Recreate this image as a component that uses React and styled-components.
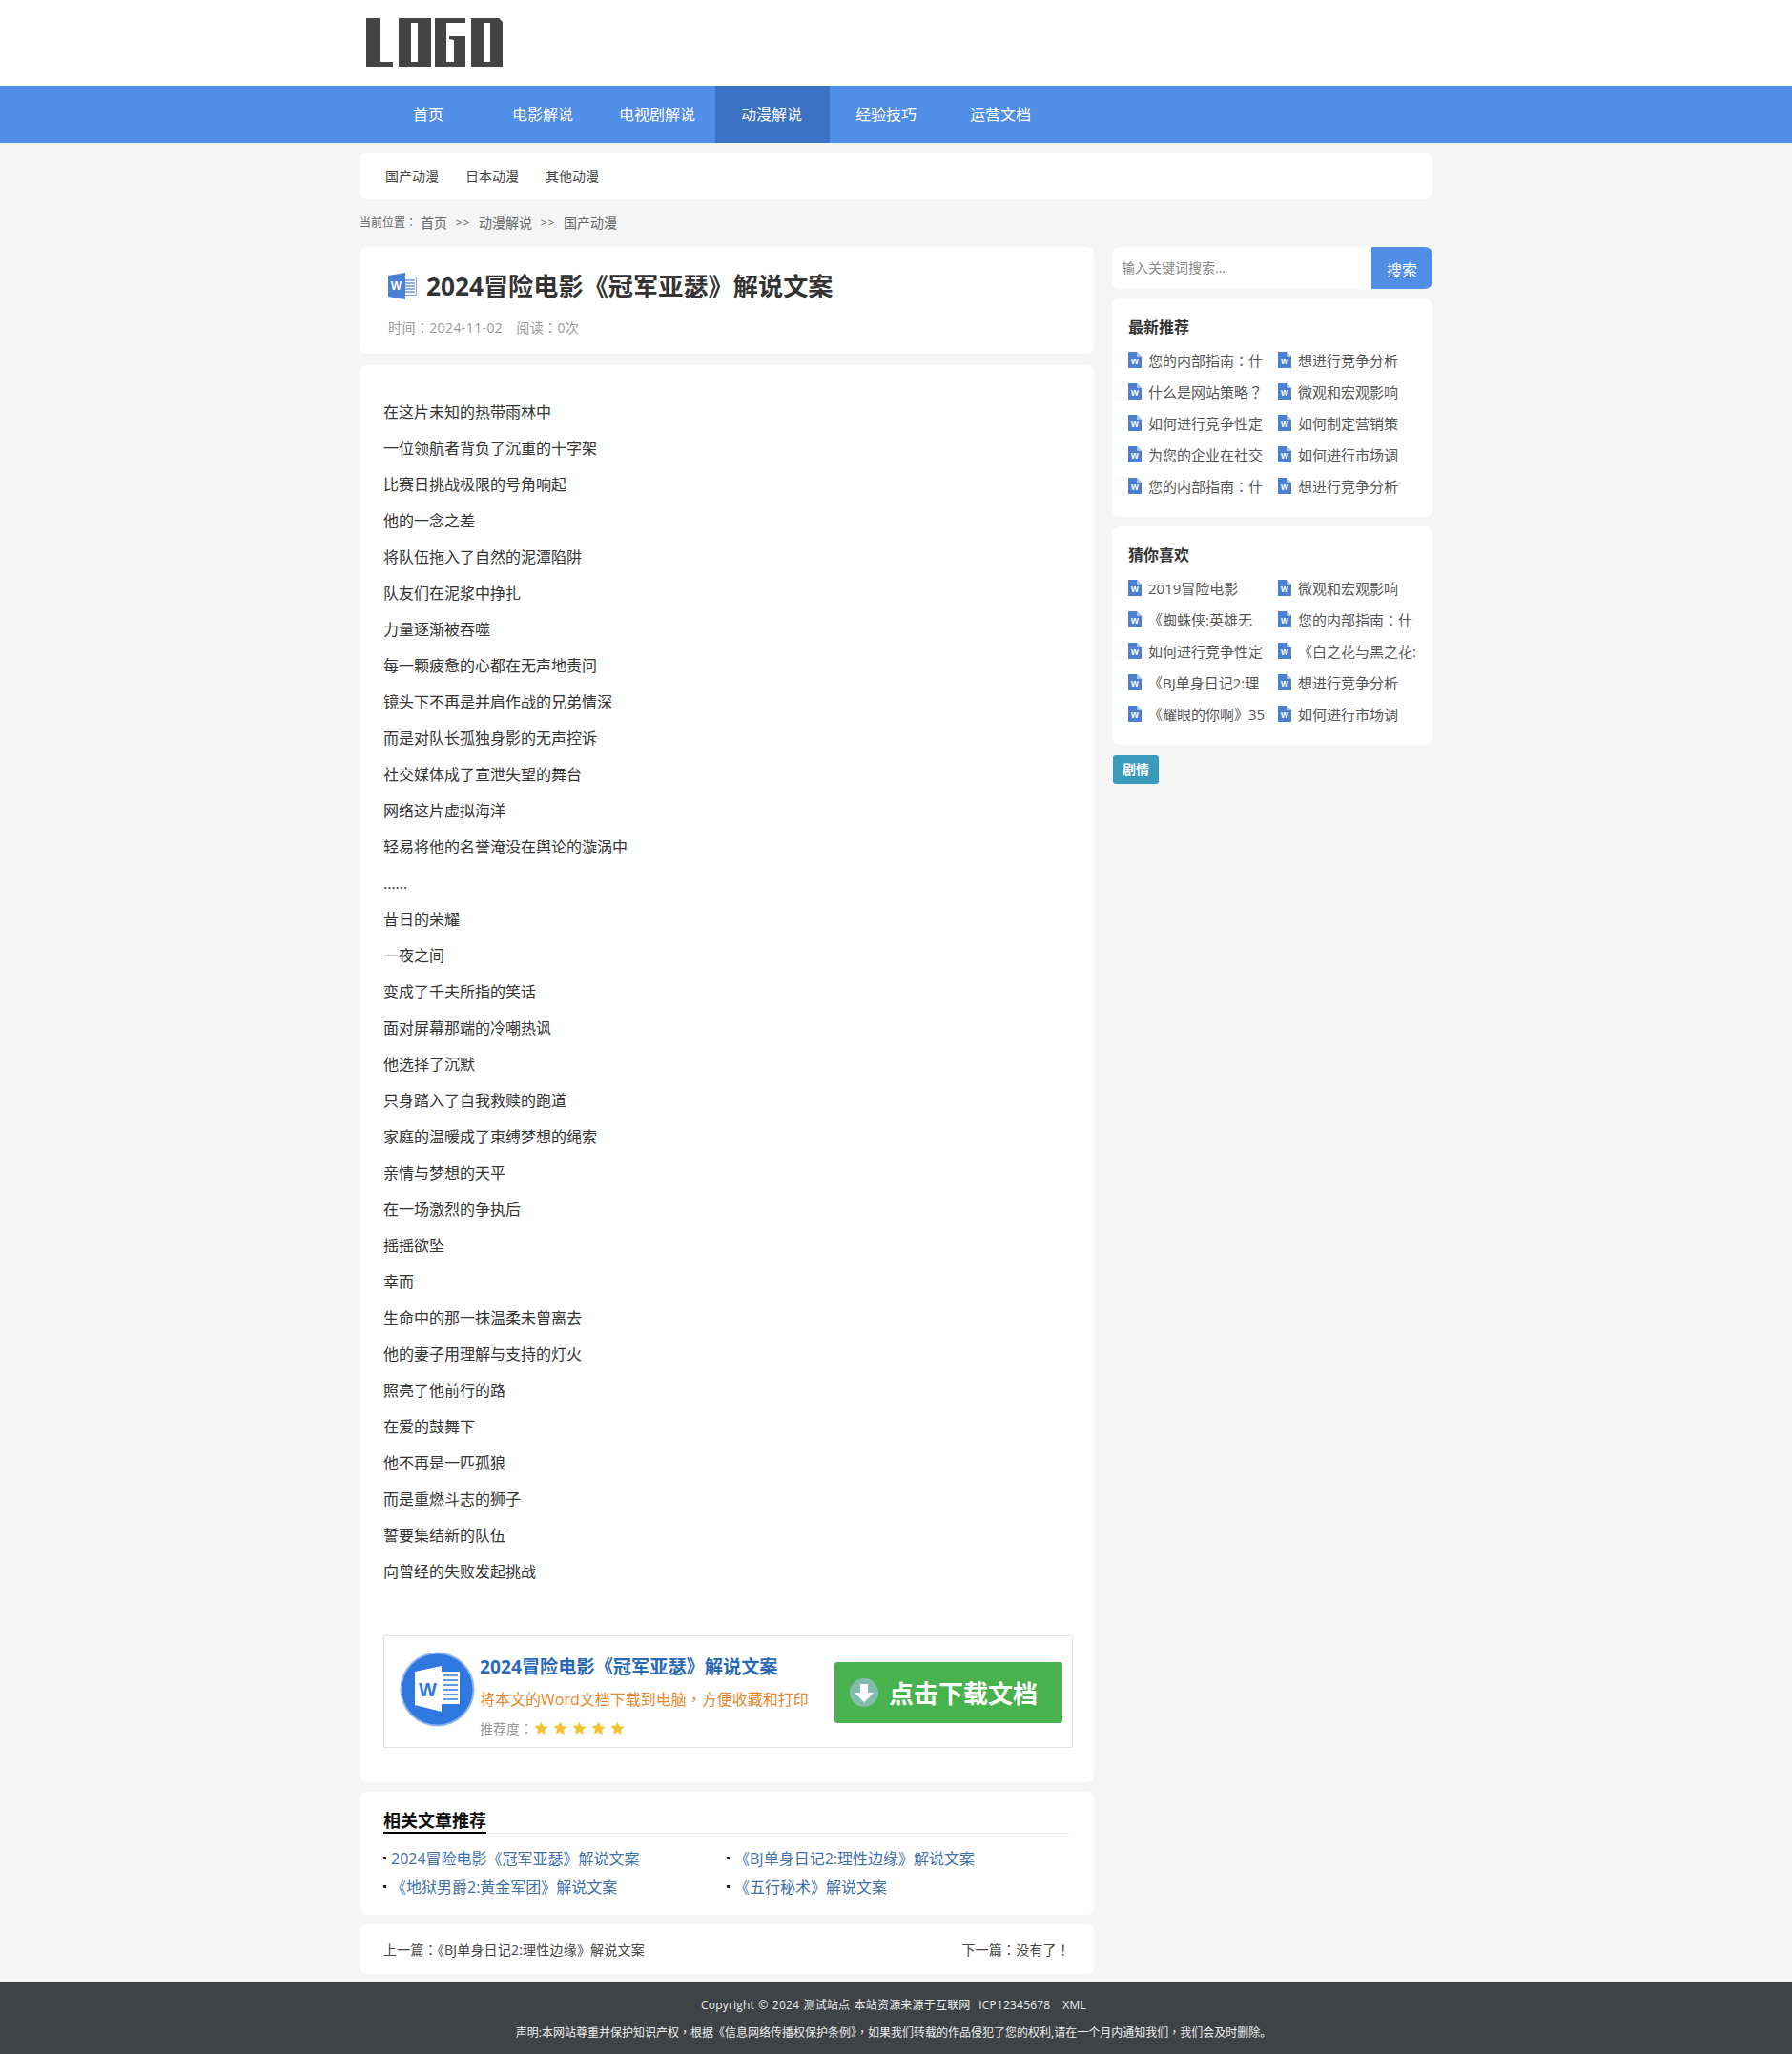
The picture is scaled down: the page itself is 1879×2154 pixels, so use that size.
import React from "react";
import styled, { createGlobalStyle } from "styled-components";

const Global = createGlobalStyle`
  html, body { margin: 0; padding: 0; background: #f5f5f5; }
  body { font-family: "Open Sans", "Noto Sans CJK SC", "Noto Sans", sans-serif; color: #333; }
  * { box-sizing: border-box; }
`;

const PunctMark = styled.span`
  font-family: "Noto Sans CJK TC", sans-serif;
`;
const T = ({ children }) =>
  children.split(/([：，？！])/).map((part, i) =>
    i % 2 ? <PunctMark key={i}>{part}</PunctMark> : part
  );

const Top = styled.header`
  height: 90px;
  background: #fff;
`;
const Wrap = styled.div`
  width: 1125px;
  margin: 0 auto;
`;
const LogoBox = styled(Wrap)`
  height: 90px;
  padding: 18px 0 0 6px;
  svg { display: block; }
`;
const NavBar = styled.nav`
  height: 60px;
  background: #518ee8;
`;
const NavRow = styled(Wrap)`
  display: flex;
  padding-left: 13px;
`;
const NavItem = styled.a`
  width: 120px;
  height: 60px;
  line-height: 60px;
  padding-right: 2px;
  text-align: center;
  font-size: 16px;
  color: #fff;
  background: ${(p) => (p.$active ? "#3b72c4" : "transparent")};
`;
const SubNav = styled(Wrap)`
  margin-top: 10px;
  height: 49px;
  background: #fff;
  border-radius: 8px;
  display: flex;
  align-items: center;
  padding: 0 0 2px 27px;
  gap: 28px;
  font-size: 14px;
  color: #444;
`;
const Crumbs = styled(Wrap)`
  height: 50px;
  padding-bottom: 2px;
  display: flex;
  align-items: center;
  font-size: 14px;
  color: #666;
`;
const CrumbLabel = styled.span`
  font-size: 12px;
  width: 64px;
`;
const CrumbSep = styled.span`
  font-size: 12px;
  width: 33px;
  text-align: center;
  letter-spacing: 1px;
`;
const Columns = styled(Wrap)`
  display: flex;
  justify-content: space-between;
  align-items: flex-start;
`;
const Main = styled.main`
  width: 770px;
  display: flex;
  flex-direction: column;
`;
const Side = styled.aside`
  width: 336px;
  display: flex;
  flex-direction: column;
`;
const Card = styled.section`
  background: #fff;
  border-radius: 8px;
`;
const TitleCard = styled(Card)`
  height: 112px;
  padding: 19px 30px 0;
`;
const TitleRow = styled.div`
  display: flex;
  align-items: center;
  gap: 10px;
  height: 44px;
`;
const Title = styled.h1`
  margin: 0;
  font-size: 26.2px;
  line-height: 44px;
  font-weight: 700;
  color: #333;
`;
const Meta = styled.div`
  margin-top: 11px;
  font-size: 14px;
  line-height: 20px;
  letter-spacing: 0.4px;
  color: #999;
  display: flex;
  gap: 14px;
`;
const Body = styled(Card)`
  margin-top: 12px;
  height: 1486px;
  padding: 30px 24px 0 25px;
`;
const Line = styled.p`
  margin: 0;
  font-size: 16px;
  line-height: 38px;
  color: #333;
`;
const DownBox = styled.div`
  margin-top: 48px;
  width: 723px;
  height: 118px;
  border: 1px solid #e5e5e5;
  display: flex;
  align-items: center;
  padding: 0 10px 0 16px;
`;
const CircleSlot = styled.div`
  flex: none;
  width: 79px;
  height: 79px;
  margin-bottom: 6px;
  svg { display: block; }
`;
const DownInfo = styled.div`
  flex: 1;
  align-self: flex-start;
  margin: 18px 0 0 5px;
  display: flex;
  flex-direction: column;
`;
const DownTitle = styled.div`
  font-size: 19.2px;
  line-height: 28px;
  font-weight: 700;
  color: #2a69b8;
`;
const DownSub = styled.div`
  margin-top: 7px;
  font-size: 16px;
  line-height: 24px;
  color: #e9872c;
  white-space: nowrap;
`;
const DownRate = styled.div`
  margin-top: 8px;
  font-size: 14px;
  line-height: 20px;
  color: #999;
  display: flex;
  align-items: center;
`;
const Stars = styled.span`
  display: flex;
  gap: 5px;
  margin-left: 1px;
`;
const DownBtn = styled.a`
  width: 239px;
  height: 64px;
  margin-top: 2px;
  background: #47b24e;
  border-radius: 3px;
  display: flex;
  align-items: center;
  padding-left: 16px;
  gap: 11px;
  font-size: 26px;
  font-weight: 700;
  color: #fff;
  white-space: nowrap;
`;
const Related = styled(Card)`
  margin-top: 10px;
  height: 129px;
  padding: 15px 25px 0;
`;
const RelatedHead = styled.div`
  border-bottom: 1px solid #eee;
  height: 29px;
`;
const RelatedTitle = styled.h3`
  display: inline-block;
  margin: 0;
  height: 29px;
  line-height: 30px;
  font-size: 18px;
  font-weight: 700;
  color: #111;
  border-bottom: 2px solid #000;
`;
const RelatedList = styled.ul`
  list-style: none;
  margin: 10px 0 0;
  padding: 0;
  display: grid;
  grid-template-columns: 360px 360px;
  grid-auto-rows: 30px;
`;
const RelatedItem = styled.li`
  display: flex;
  align-items: center;
  gap: 5px;
  font-size: 16px;
  color: #3f70a8;
  &::before {
    content: "";
    width: 3px;
    height: 3px;
    background: #222;
  }
`;
const Pager = styled(Card)`
  margin-top: 10px;
  height: 52px;
  padding: 0 25px 1px;
  display: flex;
  align-items: center;
  justify-content: space-between;
  font-size: 14px;
  letter-spacing: 0.2px;
  color: #444;
`;
const SearchBar = styled.form`
  display: flex;
  height: 44px;
  margin: 0;
`;
const SearchInput = styled.div`
  flex: 1;
  background: #fff;
  border-radius: 8px 0 0 8px;
  padding-left: 10px;
  line-height: 44px;
  font-size: 14px;
  color: #888;
`;
const SearchBtn = styled.button`
  width: 64px;
  border: 0;
  padding: 2px 0 0;
  background: #518ee8;
  color: #fff;
  font-family: inherit;
  font-size: 16px;
  border-radius: 0 8px 8px 0;
`;
const SideCard = styled(Card)`
  margin-top: 10px;
  padding: 17px 17px 0;
  height: 229px;
`;
const SideTitle = styled.h3`
  margin: 0;
  font-size: 16px;
  line-height: 26px;
  font-weight: 700;
  color: #333;
`;
const SideList = styled.ul`
  list-style: none;
  margin: 5px 0 0;
  padding: 0;
  display: grid;
  grid-template-columns: 157px 145px;
  grid-auto-rows: 33px;
`;
const SideItem = styled.li`
  display: flex;
  align-items: center;
  gap: 7px;
  font-size: 15px;
  color: #555;
  white-space: nowrap;
  svg { flex: none; }
`;
const Tag = styled.a`
  display: block;
  margin-top: 11px;
  margin-left: 1px;
  width: 48px;
  height: 30px;
  line-height: 30px;
  text-align: center;
  border-radius: 3px;
  background: #3a9abb;
  color: #fff;
  font-size: 14px;
  font-weight: 700;
`;
const Footer = styled.footer`
  margin-top: 8px;
  height: 76px;
  background: #3f4346;
  color: #eee;
  font-size: 12px;
  text-align: center;
  padding: 11px 5px 0 0;
`;
const FootLine = styled.div`
  line-height: 28px;
  white-space: nowrap;
`;
const CopyLine = styled(FootLine)`
  letter-spacing: 0.2px;
  word-spacing: 1px;
`;

const Logo = () => (
  <svg width="146" height="54" viewBox="0 0 146 54" aria-label="LOGO">
    <path fill="#444" d="M1 1h14v46h14v5H1z" />
    <path fill="#444" fillRule="evenodd" d="M35 1h34v51H35zM48 6v41h7V6z" />
    <path fill="#444" d="M73 1h32v5H85v41h8V24l-5-1v-3h17v32H73z" />
    <path fill="#444" fillRule="evenodd" d="M111 1h29l4 4v47h-33zM124 6v41h7V6z" />
  </svg>
);

const WordSmall = () => (
  <svg width="14" height="17" viewBox="0 0 14 17">
    <path fill="#4a7fd4" d="M0 0h9l5 5v12H0z" />
    <path fill="#a9c6f0" d="M9 0l5 5H9z" />
    <text x="7" y="13" textAnchor="middle" fontFamily="Liberation Sans" fontWeight="700" fontSize="10" fill="#fff">w</text>
  </svg>
);

const WordBig = () => (
  <svg width="30" height="28" viewBox="0 0 30 28">
    <path fill="#fff" stroke="#7fa3dc" strokeWidth="1" d="M16 4.5h13.5v19H16z" />
    <path stroke="#6f96d6" strokeWidth="1.4" d="M18 8h10M18 11h10M18 14h10M18 17h10M18 20h10" />
    <path fill="#4a80d6" d="M0 3l18-3v28L0 25z" />
    <text x="8.5" y="18" textAnchor="middle" fontFamily="Liberation Sans" fontWeight="700" fontSize="12" fill="#fff">W</text>
  </svg>
);

const WordCircle = () => (
  <svg width="79" height="79" viewBox="0 0 79 79">
    <circle cx="39.5" cy="39.5" r="39" fill="#8fb4ea" />
    <circle cx="39.5" cy="39.5" r="37" fill="#2f78e0" />
    <path fill="#fff" d="M44 21h19v34H44z" />
    <path stroke="#2f78e0" strokeWidth="1.5" d="M46 25h15M46 30h15M46 35h15M46 40h15M46 45h15M46 50h15" />
    <path fill="#fff" d="M16 21l28-6v48l-28-7z" />
    <text x="29.5" y="47" textAnchor="middle" fontFamily="Liberation Sans" fontWeight="700" fontSize="20" fill="#2f78e0">W</text>
  </svg>
);

const Star = () => (
  <svg width="15" height="15" viewBox="0 0 24 24">
    <path fill="#f6c232" d="M12 1l3.4 7.3 7.9 1-5.8 5.5 1.5 7.9L12 18l-7 3.7 1.5-7.9L.7 8.3l7.9-1z" />
  </svg>
);

const DownArrow = () => (
  <svg width="30" height="30" viewBox="0 0 30 30" style={{ flex: "none" }}>
    <circle cx="15" cy="15" r="15" fill="#84bdb0" />
    <path fill="#fff" d="M11 6h8v9h6L15 25 5 15h6z" />
  </svg>
);

const lines = [
  "在这片未知的热带雨林中", "一位领航者背负了沉重的十字架", "比赛日挑战极限的号角响起", "他的一念之差",
  "将队伍拖入了自然的泥潭陷阱", "队友们在泥浆中挣扎", "力量逐渐被吞噬", "每一颗疲惫的心都在无声地责问",
  "镜头下不再是并肩作战的兄弟情深", "而是对队长孤独身影的无声控诉", "社交媒体成了宣泄失望的舞台", "网络这片虚拟海洋",
  "轻易将他的名誉淹没在舆论的漩涡中", "......", "昔日的荣耀", "一夜之间", "变成了千夫所指的笑话",
  "面对屏幕那端的冷嘲热讽", "他选择了沉默", "只身踏入了自我救赎的跑道", "家庭的温暖成了束缚梦想的绳索",
  "亲情与梦想的天平", "在一场激烈的争执后", "摇摇欲坠", "幸而", "生命中的那一抹温柔未曾离去",
  "他的妻子用理解与支持的灯火", "照亮了他前行的路", "在爱的鼓舞下", "他不再是一匹孤狼", "而是重燃斗志的狮子",
  "誓要集结新的队伍", "向曾经的失败发起挑战",
];

const latest = [
  "您的内部指南：什", "想进行竞争分析", "什么是网站策略？", "微观和宏观影响",
  "如何进行竞争性定", "如何制定营销策", "为您的企业在社交", "如何进行市场调",
  "您的内部指南：什", "想进行竞争分析",
];
const guess = [
  "2019冒险电影", "微观和宏观影响", "《蜘蛛侠:英雄无", "您的内部指南：什",
  "如何进行竞争性定", "《白之花与黑之花:", "《BJ单身日记2:理", "想进行竞争分析",
  "《耀眼的你啊》35", "如何进行市场调",
];
const nav = ["首页", "电影解说", "电视剧解说", "动漫解说", "经验技巧", "运营文档"];
const related = [
  "2024冒险电影《冠军亚瑟》解说文案", "《BJ单身日记2:理性边缘》解说文案",
  "《地狱男爵2:黄金军团》解说文案", "《五行秘术》解说文案",
];

const SideBlock = ({ title, items }) => (
  <SideCard>
    <SideTitle>{title}</SideTitle>
    <SideList>
      {items.map((t, i) => (
        <SideItem key={i}>
          <WordSmall />
          <span><T>{t}</T></span>
        </SideItem>
      ))}
    </SideList>
  </SideCard>
);

export default function App() {
  return (
    <>
      <Global />
      <Top>
        <LogoBox>
          <Logo />
        </LogoBox>
      </Top>
      <NavBar>
        <NavRow>
          {nav.map((n) => (
            <NavItem key={n} $active={n === "动漫解说"}>{n}</NavItem>
          ))}
        </NavRow>
      </NavBar>
      <SubNav>
        <span>国产动漫</span>
        <span>日本动漫</span>
        <span>其他动漫</span>
      </SubNav>
      <Crumbs>
        <CrumbLabel><T>当前位置：</T></CrumbLabel>
        <span>首页</span>
        <CrumbSep>&gt;&gt;</CrumbSep>
        <span>动漫解说</span>
        <CrumbSep>&gt;&gt;</CrumbSep>
        <span>国产动漫</span>
      </Crumbs>
      <Columns>
        <Main>
          <TitleCard>
            <TitleRow>
              <WordBig />
              <Title>2024冒险电影《冠军亚瑟》解说文案</Title>
            </TitleRow>
            <Meta>
              <span><T>时间：2024-11-02</T></span>
              <span><T>阅读：0次</T></span>
            </Meta>
          </TitleCard>
          <Body>
            {lines.map((l, i) => (
              <Line key={i}>{l}</Line>
            ))}
            <DownBox>
              <CircleSlot>
                <WordCircle />
              </CircleSlot>
              <DownInfo>
                <DownTitle>2024冒险电影《冠军亚瑟》解说文案</DownTitle>
                <DownSub><T>将本文的Word文档下载到电脑，方便收藏和打印</T></DownSub>
                <DownRate>
                  <span><T>推荐度：</T></span>
                  <Stars>
                    {[0, 1, 2, 3, 4].map((i) => (
                      <Star key={i} />
                    ))}
                  </Stars>
                </DownRate>
              </DownInfo>
              <DownBtn>
                <DownArrow />
                点击下载文档
              </DownBtn>
            </DownBox>
          </Body>
          <Related>
            <RelatedHead>
              <RelatedTitle>相关文章推荐</RelatedTitle>
            </RelatedHead>
            <RelatedList>
              {related.map((r) => (
                <RelatedItem key={r}>{r}</RelatedItem>
              ))}
            </RelatedList>
          </Related>
          <Pager>
            <span><T>上一篇：《BJ单身日记2:理性边缘》解说文案</T></span>
            <span><T>下一篇：没有了！</T></span>
          </Pager>
        </Main>
        <Side>
          <SearchBar>
            <SearchInput>输入关键词搜索...</SearchInput>
            <SearchBtn type="button">搜索</SearchBtn>
          </SearchBar>
          <SideBlock title="最新推荐" items={latest} />
          <SideBlock title="猜你喜欢" items={guess} />
          <Tag>剧情</Tag>
        </Side>
      </Columns>
      <Footer>
        <CopyLine>Copyright © 2024 测试站点 本站资源来源于互联网 &nbsp;ICP12345678 &nbsp; XML</CopyLine>
        <FootLine><T>声明:本网站尊重并保护知识产权，根据《信息网络传播权保护条例》，如果我们转载的作品侵犯了您的权利,请在一个月内通知我们，我们会及时删除。</T></FootLine>
      </Footer>
    </>
  );
}
